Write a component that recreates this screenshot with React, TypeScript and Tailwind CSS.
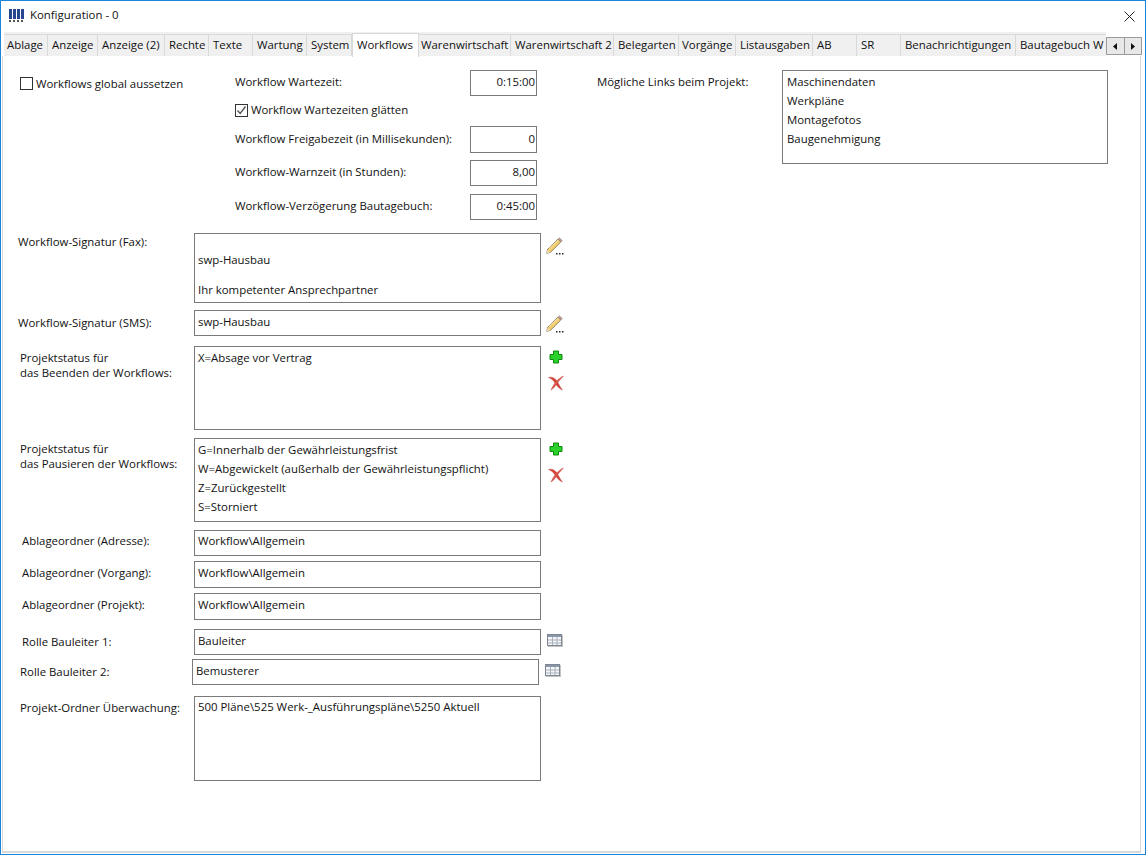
const font = { fontFamily: '"Open Sans", "Noto Sans", sans-serif' };

const tabs = [
  { label: 'Ablage', w: 44, cls: 'pl-[3px]' },
  { label: 'Anzeige', w: 50, cls: 'pl-[4px]' },
  { label: 'Anzeige (2)', w: 67, cls: 'pl-[4px]' },
  { label: 'Rechte', w: 44, cls: 'pl-[4px]' },
  { label: 'Texte', w: 44, cls: 'pl-[4px]' },
  { label: 'Wartung', w: 54, cls: 'pl-[4px]' },
  { label: 'System', w: 45, cls: 'pl-[4px]' },
  { label: 'Workflows', w: 67, active: true, cls: 'pl-[4px]' },
  { label: 'Warenwirtschaft', w: 92, cls: 'pl-[2px]' },
  { label: 'Warenwirtschaft 2', w: 103, cls: 'pl-[4px]' },
  { label: 'Belegarten', w: 65, cls: 'pl-[4px]' },
  { label: 'Vorgänge', w: 57, cls: 'pl-[3px]' },
  { label: 'Listausgaben', w: 77, cls: 'pl-[4px]' },
  { label: 'AB', w: 44, cls: 'pl-[4px]' },
  { label: 'SR', w: 44, cls: 'pl-[4px]' },
  { label: 'Benachrichtigungen', w: 115, cls: 'pl-[4px]' },
];

function AppIcon() {
  return (
    <svg width="16" height="14" viewBox="0 0 16 14">
      <rect x="0" y="0" width="3" height="10" fill="#24478f" />
      <rect x="4" y="0" width="3" height="10" fill="#24478f" />
      <rect x="8" y="0" width="3" height="10" fill="#24478f" />
      <rect x="12" y="0" width="3" height="10" fill="#24478f" />
      <rect x="0" y="11" width="2" height="2" fill="#555" />
      <rect x="4" y="11" width="2" height="2" fill="#555" />
      <rect x="8" y="11" width="2" height="2" fill="#555" />
      <rect x="12" y="11" width="2" height="2" fill="#555" />
    </svg>
  );
}

function PencilIcon() {
  return (
    <svg width="18" height="18" viewBox="0 0 18 18" className="shrink-0">
      <path d="M1.5 12.5 L12 2.2 L14.8 5 L4.3 15.4 L0.8 16.3 Z" fill="#f3cf72" stroke="#7a6a3a" strokeWidth="0.8" />
      <path d="M3 11.5 L12.8 2.8" stroke="#fff3c8" strokeWidth="0.8" />
      <path d="M12 2.2 L13.4 0.9 L16.2 3.6 L14.8 5 Z" fill="#d98c8c" stroke="#7d8a80" strokeWidth="0.7" />
      <path d="M1.4 13 L0.8 16.3 L4 15.5 Z" fill="#efe0c0" />
      <rect x="10" y="16" width="1.5" height="1.5" fill="#222" />
      <rect x="13" y="16" width="1.5" height="1.5" fill="#222" />
      <rect x="16" y="16" width="1.5" height="1.5" fill="#222" />
    </svg>
  );
}

function PlusIcon() {
  return (
    <svg width="14" height="14" viewBox="0 0 14 14">
      <path d="M4.5 1 H9.5 V4.5 H13 V9.5 H9.5 V13 H4.5 V9.5 H1 V4.5 H4.5 Z" fill="#2bd02b" stroke="#0f8a0f" strokeWidth="1" />
    </svg>
  );
}

function CrossIcon() {
  return (
    <svg width="16" height="16" viewBox="0 0 16 16">
      <path d="M0.5 2.5 C4 1.5 7 3 9 6 C10.5 8.5 12 12 14.5 15 C11 13.5 8.5 10.5 7 8 C5.5 5.5 3.5 3.5 0.5 2.5 Z" fill="#d9433a" stroke="#b33a32" strokeWidth="0.4" />
      <path d="M15.5 1 C11 3 6.5 7 3 15 C5 14 6.5 12 8 10 C10 7 12.5 4 15.5 1 Z" fill="#e0594e" stroke="#b33a32" strokeWidth="0.4" />
    </svg>
  );
}

function GridIcon() {
  return (
    <svg width="16" height="13" viewBox="0 0 16 13">
      <rect x="1" y="1" width="15" height="12" fill="#c4c4c4" />
      <rect x="0.5" y="0.5" width="14" height="11" fill="#f5f7fa" stroke="#7d8794" />
      <rect x="1" y="1" width="13" height="2" fill="#8a97a8" />
      <path d="M1 6 H14 M1 9 H14 M5.5 3 V11 M10 3 V11" stroke="#a8b0ba" strokeWidth="1" />
    </svg>
  );
}

function Box({ children, className }: { children?: React.ReactNode; className: string }) {
  return <div className={`border border-[#7a7a7a] bg-white leading-[19px] ${className}`}>{children}</div>;
}

function Checkbox({ checked }: { checked?: boolean }) {
  return (
    <span className="flex h-[13px] w-[13px] shrink-0 items-center justify-center border border-[#333] bg-white">
      {checked && (
        <svg width="11" height="11" viewBox="0 0 11 11">
          <path d="M1.5 5.5 L4.2 8.5 L9.5 1.5" fill="none" stroke="#555" strokeWidth="1.4" />
        </svg>
      )}
    </span>
  );
}

function TimeRow({ label, value, className }: { label: string; value: string; className: string }) {
  return (
    <div className={`flex items-center ${className}`}>
      <span className="w-[235px] pb-[2px]">{label}</span>
      <div className="flex h-full w-[67px] items-center justify-end border border-[#7a7a7a] pb-[2px] pr-[1px]">{value}</div>
    </div>
  );
}

function FormRow({
  label,
  labelClass,
  className,
  boxClass,
  children,
  side,
}: {
  label: React.ReactNode;
  labelClass: string;
  className: string;
  boxClass: string;
  children?: React.ReactNode;
  side?: React.ReactNode;
}) {
  return (
    <div className={`flex ${className}`}>
      <div className={`shrink-0 ${labelClass}`}>{label}</div>
      <Box className={`shrink-0 px-[3px] ${boxClass}`}>{children}</Box>
      {side}
    </div>
  );
}

export default function App() {
  return (
    <div className="flex h-[855px] w-[1146px] flex-col overflow-hidden border border-[#1a86d9] bg-white text-[11.4px] text-[#111]" style={font}>
      <div className="flex h-[30px] shrink-0 items-center pl-[8px]">
        <AppIcon />
        <span className="mb-[2px] ml-[5px]">Konfiguration - 0</span>
        <svg width="11" height="11" viewBox="0 0 11 11" className="ml-auto mr-[10px]">
          <path d="M0.5 0.5 L10.5 10.5 M10.5 0.5 L0.5 10.5" stroke="#222" strokeWidth="1" />
        </svg>
      </div>

      <div className="flex h-[25px] shrink-0 items-end pl-[3px]">
        <div className="-mb-[1px] flex h-[25px] w-[1102px] items-end overflow-hidden bg-[#f0f0f0]">
          {tabs.map((t) => (
            <div
              key={t.label}
              style={{ width: t.w }}
              className={
                t.active
                  ? `z-10 flex h-[24px] shrink-0 items-start whitespace-nowrap border-x border-t border-[#d9d9d9] bg-white pt-[2px] ${t.cls}`
                  : `flex h-[23px] shrink-0 items-center whitespace-nowrap border-y border-r border-[#d9d9d9] bg-[#f0f0f0] pb-[2px] ${t.cls}`
              }
            >
              {t.label}
            </div>
          ))}
          <div className="flex h-[23px] flex-1 items-center overflow-hidden whitespace-nowrap border-y border-[#d9d9d9] bg-[#f0f0f0] pb-[2px] pl-[4px]">Bautagebuch W</div>
        </div>
        <div className="mb-[1px] flex h-[18px] w-[36px] shrink-0 border border-[#9a9a9a] bg-[#e8e8e8]">
          <div className="flex flex-1 items-center justify-center border-r border-[#9a9a9a]">
            <svg width="4" height="7" viewBox="0 0 4 7"><path d="M4 0 V7 L0 3.5 Z" fill="#111" /></svg>
          </div>
          <div className="flex flex-1 items-center justify-center">
            <svg width="4" height="7" viewBox="0 0 4 7"><path d="M0 0 V7 L4 3.5 Z" fill="#111" /></svg>
          </div>
        </div>
      </div>

      <div className="mb-[1px] ml-[1px] mr-[4px] flex-1 border border-[#d9d9d9] border-b-2 border-t-0 bg-white pl-[5px]">
        <div className="flex h-[175px] pt-[14px]">
          <div className="flex w-[227px] shrink-0 items-start pl-[12px] pt-[7px]">
            <Checkbox />
            <span className="ml-[3px] leading-[14px]">Workflows global aussetzen</span>
          </div>
          <div className="w-[302px] shrink-0">
            <TimeRow label="Workflow Wartezeit:" value="0:15:00" className="h-[26px]" />
            <div className="mb-[8px] mt-[6px] flex h-[16px] items-center">
              <Checkbox checked />
              <span className="ml-[3px]">Workflow Wartezeiten glätten</span>
            </div>
            <TimeRow label="Workflow Freigabezeit (in Millisekunden):" value="0" className="h-[27px]" />
            <TimeRow label="Workflow-Warnzeit (in Stunden):" value="8,00" className="mt-[7px] h-[26px]" />
            <TimeRow label="Workflow-Verzögerung Bautagebuch:" value="0:45:00" className="mt-[8px] h-[26px]" />
          </div>
          <div className="ml-[60px] w-[185px] shrink-0 pt-[3px]">Mögliche Links beim Projekt:</div>
          <Box className="h-[94px] w-[326px] shrink-0 px-[4px] pt-[1px]">
            <div>Maschinendaten</div>
            <div>Werkpläne</div>
            <div>Montagefotos</div>
            <div>Baugenehmigung</div>
          </Box>
        </div>

        <div className="mt-[2px]">
          <FormRow
            label="Workflow-Signatur (Fax):"
            labelClass="w-[186px] pl-[10px]"
            className=""
            boxClass="h-[70px] w-[347px] pt-[18px]"
            side={<div className="ml-[5px] mt-[4px]"><PencilIcon /></div>}
          >
            <div className="leading-[15px]">swp-Hausbau</div>
            <div className="mt-[15px] leading-[15px]">Ihr kompetenter Ansprechpartner</div>
          </FormRow>
          <FormRow
            label="Workflow-Signatur (SMS):"
            labelClass="w-[186px] pl-[10px] pt-[4px]"
            className="mt-[7px]"
            boxClass="flex h-[26px] w-[347px] items-center pb-[4px]"
            side={<div className="ml-[5px] mt-[5px]"><PencilIcon /></div>}
          >
            swp-Hausbau
          </FormRow>
          <FormRow
            label={<>Projektstatus für<br />das Beenden der Workflows:</>}
            labelClass="w-[186px] pl-[12px] pt-[4px] leading-[15px]"
            className="mt-[10px]"
            boxClass="h-[84px] w-[347px] pt-[1px]"
            side={
              <div className="ml-[8px] flex flex-col pt-[4px]">
                <PlusIcon />
                <div className="-ml-[1px] mt-[11px]"><CrossIcon /></div>
              </div>
            }
          >
            X=Absage vor Vertrag
          </FormRow>
          <FormRow
            label={<>Projektstatus für<br />das Pausieren der Workflows:</>}
            labelClass="w-[186px] pl-[12px] pt-[3px] leading-[15px]"
            className="mt-[8px]"
            boxClass="h-[84px] w-[347px] pt-[1px]"
            side={
              <div className="ml-[8px] flex flex-col pt-[4px]">
                <PlusIcon />
                <div className="-ml-[1px] mt-[11px]"><CrossIcon /></div>
              </div>
            }
          >
            <div>G=Innerhalb der Gewährleistungsfrist</div>
            <div>W=Abgewickelt (außerhalb der Gewährleistungspflicht)</div>
            <div>Z=Zurückgestellt</div>
            <div>S=Storniert</div>
          </FormRow>
          <FormRow label="Ablageordner (Adresse):" labelClass="w-[186px] pl-[14px] pt-[2px]" className="mt-[8px]" boxClass="flex h-[26px] w-[347px] items-center pb-[5px]">
            Workflow\Allgemein
          </FormRow>
          <FormRow label="Ablageordner (Vorgang):" labelClass="w-[186px] pl-[14px] pt-[3px]" className="mt-[5px]" boxClass="flex h-[27px] w-[347px] items-center pb-[4px]">
            Workflow\Allgemein
          </FormRow>
          <FormRow label="Ablageordner (Projekt):" labelClass="w-[186px] pl-[14px] pt-[3px]" className="mt-[5px]" boxClass="flex h-[27px] w-[347px] items-center pb-[4px]">
            Workflow\Allgemein
          </FormRow>
          <FormRow
            label="Rolle Bauleiter 1:"
            labelClass="w-[186px] pl-[14px] pt-[4px]"
            className="mt-[9px]"
            boxClass="flex h-[26px] w-[347px] items-center pb-[4px]"
            side={<div className="ml-[6px] mt-[5px]"><GridIcon /></div>}
          >
            Bauleiter
          </FormRow>
          <FormRow
            label="Rolle Bauleiter 2:"
            labelClass="w-[184px] pl-[12px] pt-[4px]"
            className="mt-[4px]"
            boxClass="flex h-[26px] w-[347px] items-center pb-[4px]"
            side={<div className="ml-[6px] mt-[5px]"><GridIcon /></div>}
          >
            Bemusterer
          </FormRow>
          <FormRow label="Projekt-Ordner Überwachung:" labelClass="w-[186px] pl-[12px] pt-[3px]" className="mt-[11px]" boxClass="h-[85px] w-[347px]">
            500 Pläne\525 Werk-_Ausführungspläne\5250 Aktuell
          </FormRow>
        </div>
      </div>
    </div>
  );
}
